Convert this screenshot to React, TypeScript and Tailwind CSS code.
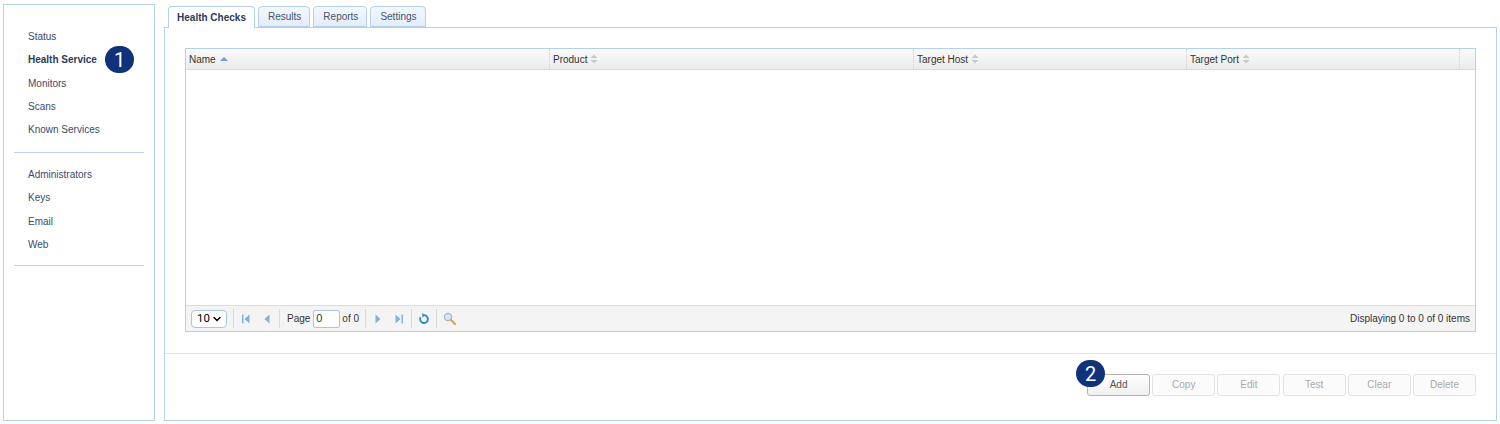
import { ChevronDown } from "lucide-react"

const topLinks = ["Status", "Health Service", "Monitors", "Scans", "Known Services"]
const bottomLinks = ["Administrators", "Keys", "Email", "Web"]
const tabs = ["Results", "Reports", "Settings"]
const actions = ["Copy", "Edit", "Test", "Clear", "Delete"]

const Badge = ({ n, className }: { n: number; className: string }) => (
  <span
    className={`absolute flex h-[27px] w-[29px] items-center justify-center rounded-full bg-[#10317c] font-['Roboto',sans-serif] text-[20px] leading-none text-white ${className}`}
  >
    {n}
  </span>
)

const NavLink = ({ label }: { label: string }) => (
  <div
    className={`flex h-[23.4px] items-center text-[10px] ${
      label === "Health Service" ? "font-bold text-[#2b3a5c]" : "text-[#3c4a6b]"
    }`}
  >
    {label}
  </div>
)

const SortIcon = () => (
  <svg width="8" height="10" viewBox="0 0 8 10" className="ml-[3px]">
    <path d="M4 0.5 7.5 4H0.5Z" fill="#c8c8c8" />
    <path d="M0.5 6H7.5L4 9.5Z" fill="#c8c8c8" />
  </svg>
)

const HeaderCell = ({ label, width, asc }: { label: string; width: string; asc?: boolean }) => (
  <div className={`flex h-full items-center border-r border-dotted border-[#d0d0d0] pl-[3px] ${width}`}>
    <span className="text-[10px] text-[#333]">{label}</span>
    {asc ? (
      <svg width="8" height="4" viewBox="0 0 8 4" className="ml-[4px]">
        <path d="M4 0 8 4H0Z" fill="#6f9bd1" />
      </svg>
    ) : (
      <SortIcon />
    )}
  </div>
)

const Sep = () => <div className="mx-[6px] h-[19px] w-px bg-[#d9d9d9]" />

const PagerIcon = ({ d }: { d: string }) => (
  <svg width="10" height="10" viewBox="0 0 10 10" className="mx-[1px]">
    <path d={d} fill="#7db3df" />
  </svg>
)

export default function App() {
  return (
    <div className="flex h-[424px] w-[1500px] gap-[9px] bg-white pt-[4px] pr-[3px] pb-[3px] pl-[3px] font-['Liberation_Sans',Arial,sans-serif]">
      {/* Sidebar */}
      <aside className="relative w-[152px] shrink-0 border border-[#b5d0ee] px-[10px] pt-[19.7px]">
        <div className="border-b border-[#b9d3f0] pb-[10.3px] pl-[14px]">
          {topLinks.map((l) => (
            <NavLink key={l} label={l} />
          ))}
        </div>
        <div className="border-b border-[#b9d3f0] pt-[9.7px] pb-[9.3px] pl-[14px]">
          {bottomLinks.map((l) => (
            <NavLink key={l} label={l} />
          ))}
        </div>
        <Badge n={1} className="top-[41px] left-[101px]" />
      </aside>

      {/* Main */}
      <main className="flex min-w-0 flex-1 flex-col pt-[2px]">
        <div className="z-10 -mb-px flex h-[22px] gap-[3px] pl-[4px]">
          <div className="flex h-[22px] w-[87px] items-center justify-center rounded-t-[4px] border border-b-0 border-[#b5d0ee] bg-white text-[10px] font-bold text-[#2b3a5c]">
            Health Checks
          </div>
          {tabs.map((t) => (
            <div
              key={t}
              className="flex h-[21px] items-center justify-center rounded-t-[4px] border border-[#b5d0ee] bg-gradient-to-b from-[#f4f8fe] to-[#e3edfa] pr-[8px] pl-[9px] text-[10px] text-[#44546f]"
            >
              {t}
            </div>
          ))}
        </div>

        <div className="relative flex flex-1 flex-col border border-[#b5d0ee]">
          <div className="mx-[20px] mt-[20px] flex h-[284px] flex-col border border-[#b5d0ee]">
            <div className="flex h-[21px] border-b border-[#dcdcdc] bg-gradient-to-b from-[#fafafa] to-[#ececec]">
              <HeaderCell label="Name" width="w-[364px]" asc />
              <HeaderCell label="Product" width="w-[364px]" />
              <HeaderCell label="Target Host" width="w-[273px]" />
              <HeaderCell label="Target Port" width="w-[273px]" />
            </div>
            <div className="flex-1 bg-white" />
            <div className="flex h-[26px] items-center border-t border-[#dcdcdc] bg-[#f4f4f4] pr-[5px] pl-[5px] text-[10px] text-[#333]">
              <div className="flex h-[18px] w-[36px] items-center justify-between rounded-[4px] border border-[#a9c6e8] bg-white pr-[3px] pl-[5px] font-['Roboto',sans-serif] text-[11.5px] text-black">
                10
                <ChevronDown size={12} strokeWidth={3} />
              </div>
              <Sep />
              <PagerIcon d="M1 0.5H2.5V9.5H1ZM8.5 0.5V9.5L3.5 5Z" />
              <div className="w-[9px]" />
              <PagerIcon d="M7.5 0.5V9.5L2.5 5Z" />
              <Sep />
              <span className="pl-[1px]">Page</span>
              <div className="mr-[2px] ml-[3px] flex h-[18px] w-[27px] items-center rounded-[2px] border border-[#a9c6e8] bg-white pl-[2px] text-[11px]">
                0
              </div>
              <span>of 0</span>
              <Sep />
              <PagerIcon d="M2.5 0.5V9.5L7.5 5Z" />
              <div className="w-[9px]" />
              <PagerIcon d="M1.5 0.5V9.5L6.5 5ZM7.5 0.5H9V9.5H7.5Z" />
              <Sep />
              <svg width="12" height="12" viewBox="0 0 12 12">
                <path d="M6 2.2A3.9 3.9 0 1 1 2.6 4.2" fill="none" stroke="#2f86c9" strokeWidth="1.8" />
                <path d="M4.2 0 7.4 2.2 4.4 4.4Z" fill="#2f86c9" />
              </svg>
              <Sep />
              <svg width="13" height="13" viewBox="0 0 13 13">
                <circle cx="5" cy="5" r="3.6" fill="#d8e6f3" stroke="#9db8cf" strokeWidth="1.3" />
                <path d="M8 8 12 12" stroke="#d9a05b" strokeWidth="2.2" strokeLinecap="round" />
              </svg>
              <span className="ml-auto">Displaying 0 to 0 of 0 items</span>
            </div>
          </div>

          <div className="mt-[21px] flex flex-1 items-start justify-end gap-[2.2px] border-t border-[#dde6f2] pt-[20px] pr-[20px]">
            <div className="flex h-[22px] w-[63px] items-center justify-center rounded-[3px] border border-[#b3b3b3] bg-gradient-to-b from-white to-[#f0f0f0] pb-[1px] text-[10px] text-[#555]">
              Add
            </div>
            {actions.map((a) => (
              <div
                key={a}
                className="flex h-[22px] w-[63px] items-center justify-center rounded-[3px] border border-[#e2e2e2] bg-[#fbfbfb] pb-[1px] text-[10px] text-[#aaa]"
              >
                {a}
              </div>
            ))}
          </div>

          <Badge n={2} className="top-[332px] left-[911px]" />
        </div>
      </main>
    </div>
  )
}
